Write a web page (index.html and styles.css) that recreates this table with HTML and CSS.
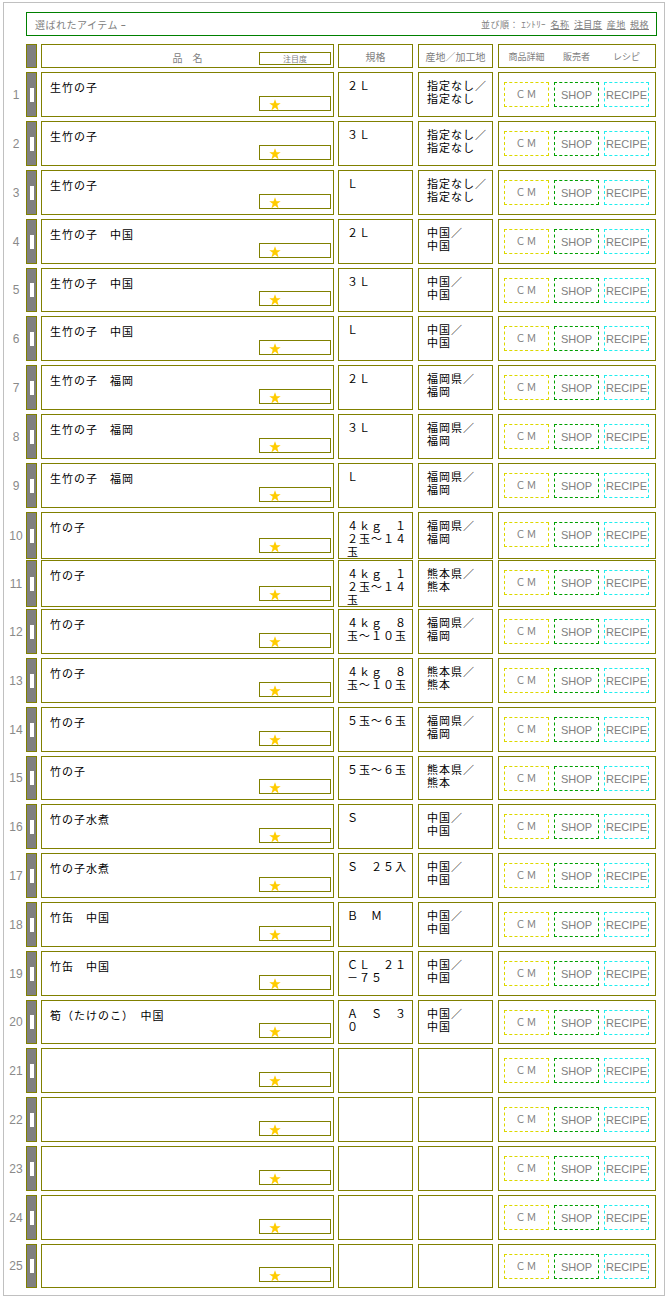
FILE: index.html
```html
<!DOCTYPE html>
<html lang="ja">
<head>
<meta charset="utf-8">
<title>選ばれたアイテム</title>
<link rel="stylesheet" href="styles.css">
</head>
<body>
<div class="page">
  <div class="title">
    <span class="title-text">選ばれたアイテム ｰ</span>
    <span class="sort">並び順： ｴﾝﾄﾘｰ <a href="#">名称</a> <a href="#">注目度</a> <a href="#">産地</a> <a href="#">規格</a></span>
  </div>
  <div class="list">
    <div class="row head">
      <span class="num"></span>
      <div class="handle"></div>
      <div class="cell name-head"><span class="head-label">品　名</span><span class="rate-head">注目度</span></div>
      <div class="cell head-text">規格</div>
      <div class="cell head-text origin-col">産地／加工地</div>
      <div class="cell links-head"><span>商品詳細</span><span>販売者</span><span>レシピ</span></div>
    </div>

    <div class="row"><span class="num">1</span><div class="handle"><i class="grip"></i></div><div class="cell name"><span>生竹の子</span><div class="rate"><svg class="star" viewBox="0 0 12 12"><polygon points="6,0.3 7.5,4.3 11.7,4.3 8.3,6.8 9.6,11.4 6,8.6 2.4,11.4 3.7,6.8 0.3,4.3 4.5,4.3"/></svg></div></div><div class="cell spec">２Ｌ</div><div class="cell origin">指定なし／<br>指定なし</div><div class="cell links"><span class="btn cm">ＣＭ</span><span class="btn shop">SHOP</span><span class="btn recipe">RECIPE</span></div></div>

    <div class="row"><span class="num">2</span><div class="handle"><i class="grip"></i></div><div class="cell name"><span>生竹の子</span><div class="rate"><svg class="star" viewBox="0 0 12 12"><polygon points="6,0.3 7.5,4.3 11.7,4.3 8.3,6.8 9.6,11.4 6,8.6 2.4,11.4 3.7,6.8 0.3,4.3 4.5,4.3"/></svg></div></div><div class="cell spec">３Ｌ</div><div class="cell origin">指定なし／<br>指定なし</div><div class="cell links"><span class="btn cm">ＣＭ</span><span class="btn shop">SHOP</span><span class="btn recipe">RECIPE</span></div></div>

    <div class="row"><span class="num">3</span><div class="handle"><i class="grip"></i></div><div class="cell name"><span>生竹の子</span><div class="rate"><svg class="star" viewBox="0 0 12 12"><polygon points="6,0.3 7.5,4.3 11.7,4.3 8.3,6.8 9.6,11.4 6,8.6 2.4,11.4 3.7,6.8 0.3,4.3 4.5,4.3"/></svg></div></div><div class="cell spec">Ｌ</div><div class="cell origin">指定なし／<br>指定なし</div><div class="cell links"><span class="btn cm">ＣＭ</span><span class="btn shop">SHOP</span><span class="btn recipe">RECIPE</span></div></div>

    <div class="row"><span class="num">4</span><div class="handle"><i class="grip"></i></div><div class="cell name"><span>生竹の子　中国</span><div class="rate"><svg class="star" viewBox="0 0 12 12"><polygon points="6,0.3 7.5,4.3 11.7,4.3 8.3,6.8 9.6,11.4 6,8.6 2.4,11.4 3.7,6.8 0.3,4.3 4.5,4.3"/></svg></div></div><div class="cell spec">２Ｌ</div><div class="cell origin">中国／<br>中国</div><div class="cell links"><span class="btn cm">ＣＭ</span><span class="btn shop">SHOP</span><span class="btn recipe">RECIPE</span></div></div>

    <div class="row"><span class="num">5</span><div class="handle"><i class="grip"></i></div><div class="cell name"><span>生竹の子　中国</span><div class="rate"><svg class="star" viewBox="0 0 12 12"><polygon points="6,0.3 7.5,4.3 11.7,4.3 8.3,6.8 9.6,11.4 6,8.6 2.4,11.4 3.7,6.8 0.3,4.3 4.5,4.3"/></svg></div></div><div class="cell spec">３Ｌ</div><div class="cell origin">中国／<br>中国</div><div class="cell links"><span class="btn cm">ＣＭ</span><span class="btn shop">SHOP</span><span class="btn recipe">RECIPE</span></div></div>

    <div class="row"><span class="num">6</span><div class="handle"><i class="grip"></i></div><div class="cell name"><span>生竹の子　中国</span><div class="rate"><svg class="star" viewBox="0 0 12 12"><polygon points="6,0.3 7.5,4.3 11.7,4.3 8.3,6.8 9.6,11.4 6,8.6 2.4,11.4 3.7,6.8 0.3,4.3 4.5,4.3"/></svg></div></div><div class="cell spec">Ｌ</div><div class="cell origin">中国／<br>中国</div><div class="cell links"><span class="btn cm">ＣＭ</span><span class="btn shop">SHOP</span><span class="btn recipe">RECIPE</span></div></div>

    <div class="row"><span class="num">7</span><div class="handle"><i class="grip"></i></div><div class="cell name"><span>生竹の子　福岡</span><div class="rate"><svg class="star" viewBox="0 0 12 12"><polygon points="6,0.3 7.5,4.3 11.7,4.3 8.3,6.8 9.6,11.4 6,8.6 2.4,11.4 3.7,6.8 0.3,4.3 4.5,4.3"/></svg></div></div><div class="cell spec">２Ｌ</div><div class="cell origin">福岡県／<br>福岡</div><div class="cell links"><span class="btn cm">ＣＭ</span><span class="btn shop">SHOP</span><span class="btn recipe">RECIPE</span></div></div>

    <div class="row"><span class="num">8</span><div class="handle"><i class="grip"></i></div><div class="cell name"><span>生竹の子　福岡</span><div class="rate"><svg class="star" viewBox="0 0 12 12"><polygon points="6,0.3 7.5,4.3 11.7,4.3 8.3,6.8 9.6,11.4 6,8.6 2.4,11.4 3.7,6.8 0.3,4.3 4.5,4.3"/></svg></div></div><div class="cell spec">３Ｌ</div><div class="cell origin">福岡県／<br>福岡</div><div class="cell links"><span class="btn cm">ＣＭ</span><span class="btn shop">SHOP</span><span class="btn recipe">RECIPE</span></div></div>

    <div class="row"><span class="num">9</span><div class="handle"><i class="grip"></i></div><div class="cell name"><span>生竹の子　福岡</span><div class="rate"><svg class="star" viewBox="0 0 12 12"><polygon points="6,0.3 7.5,4.3 11.7,4.3 8.3,6.8 9.6,11.4 6,8.6 2.4,11.4 3.7,6.8 0.3,4.3 4.5,4.3"/></svg></div></div><div class="cell spec">Ｌ</div><div class="cell origin">福岡県／<br>福岡</div><div class="cell links"><span class="btn cm">ＣＭ</span><span class="btn shop">SHOP</span><span class="btn recipe">RECIPE</span></div></div>

    <div class="row"><span class="num">10</span><div class="handle"><i class="grip"></i></div><div class="cell name"><span>竹の子</span><div class="rate"><svg class="star" viewBox="0 0 12 12"><polygon points="6,0.3 7.5,4.3 11.7,4.3 8.3,6.8 9.6,11.4 6,8.6 2.4,11.4 3.7,6.8 0.3,4.3 4.5,4.3"/></svg></div></div><div class="cell spec">４ｋｇ　１２玉～１４玉</div><div class="cell origin">福岡県／<br>福岡</div><div class="cell links"><span class="btn cm">ＣＭ</span><span class="btn shop">SHOP</span><span class="btn recipe">RECIPE</span></div></div>

    <div class="row"><span class="num">11</span><div class="handle"><i class="grip"></i></div><div class="cell name"><span>竹の子</span><div class="rate"><svg class="star" viewBox="0 0 12 12"><polygon points="6,0.3 7.5,4.3 11.7,4.3 8.3,6.8 9.6,11.4 6,8.6 2.4,11.4 3.7,6.8 0.3,4.3 4.5,4.3"/></svg></div></div><div class="cell spec">４ｋｇ　１２玉～１４玉</div><div class="cell origin">熊本県／<br>熊本</div><div class="cell links"><span class="btn cm">ＣＭ</span><span class="btn shop">SHOP</span><span class="btn recipe">RECIPE</span></div></div>

    <div class="row"><span class="num">12</span><div class="handle"><i class="grip"></i></div><div class="cell name"><span>竹の子</span><div class="rate"><svg class="star" viewBox="0 0 12 12"><polygon points="6,0.3 7.5,4.3 11.7,4.3 8.3,6.8 9.6,11.4 6,8.6 2.4,11.4 3.7,6.8 0.3,4.3 4.5,4.3"/></svg></div></div><div class="cell spec">４ｋｇ　８玉～１０玉</div><div class="cell origin">福岡県／<br>福岡</div><div class="cell links"><span class="btn cm">ＣＭ</span><span class="btn shop">SHOP</span><span class="btn recipe">RECIPE</span></div></div>

    <div class="row"><span class="num">13</span><div class="handle"><i class="grip"></i></div><div class="cell name"><span>竹の子</span><div class="rate"><svg class="star" viewBox="0 0 12 12"><polygon points="6,0.3 7.5,4.3 11.7,4.3 8.3,6.8 9.6,11.4 6,8.6 2.4,11.4 3.7,6.8 0.3,4.3 4.5,4.3"/></svg></div></div><div class="cell spec">４ｋｇ　８玉～１０玉</div><div class="cell origin">熊本県／<br>熊本</div><div class="cell links"><span class="btn cm">ＣＭ</span><span class="btn shop">SHOP</span><span class="btn recipe">RECIPE</span></div></div>

    <div class="row"><span class="num">14</span><div class="handle"><i class="grip"></i></div><div class="cell name"><span>竹の子</span><div class="rate"><svg class="star" viewBox="0 0 12 12"><polygon points="6,0.3 7.5,4.3 11.7,4.3 8.3,6.8 9.6,11.4 6,8.6 2.4,11.4 3.7,6.8 0.3,4.3 4.5,4.3"/></svg></div></div><div class="cell spec">５玉～６玉</div><div class="cell origin">福岡県／<br>福岡</div><div class="cell links"><span class="btn cm">ＣＭ</span><span class="btn shop">SHOP</span><span class="btn recipe">RECIPE</span></div></div>

    <div class="row"><span class="num">15</span><div class="handle"><i class="grip"></i></div><div class="cell name"><span>竹の子</span><div class="rate"><svg class="star" viewBox="0 0 12 12"><polygon points="6,0.3 7.5,4.3 11.7,4.3 8.3,6.8 9.6,11.4 6,8.6 2.4,11.4 3.7,6.8 0.3,4.3 4.5,4.3"/></svg></div></div><div class="cell spec">５玉～６玉</div><div class="cell origin">熊本県／<br>熊本</div><div class="cell links"><span class="btn cm">ＣＭ</span><span class="btn shop">SHOP</span><span class="btn recipe">RECIPE</span></div></div>

    <div class="row"><span class="num">16</span><div class="handle"><i class="grip"></i></div><div class="cell name"><span>竹の子水煮</span><div class="rate"><svg class="star" viewBox="0 0 12 12"><polygon points="6,0.3 7.5,4.3 11.7,4.3 8.3,6.8 9.6,11.4 6,8.6 2.4,11.4 3.7,6.8 0.3,4.3 4.5,4.3"/></svg></div></div><div class="cell spec">Ｓ</div><div class="cell origin">中国／<br>中国</div><div class="cell links"><span class="btn cm">ＣＭ</span><span class="btn shop">SHOP</span><span class="btn recipe">RECIPE</span></div></div>

    <div class="row"><span class="num">17</span><div class="handle"><i class="grip"></i></div><div class="cell name"><span>竹の子水煮</span><div class="rate"><svg class="star" viewBox="0 0 12 12"><polygon points="6,0.3 7.5,4.3 11.7,4.3 8.3,6.8 9.6,11.4 6,8.6 2.4,11.4 3.7,6.8 0.3,4.3 4.5,4.3"/></svg></div></div><div class="cell spec">Ｓ　２５入</div><div class="cell origin">中国／<br>中国</div><div class="cell links"><span class="btn cm">ＣＭ</span><span class="btn shop">SHOP</span><span class="btn recipe">RECIPE</span></div></div>

    <div class="row"><span class="num">18</span><div class="handle"><i class="grip"></i></div><div class="cell name"><span>竹缶　中国</span><div class="rate"><svg class="star" viewBox="0 0 12 12"><polygon points="6,0.3 7.5,4.3 11.7,4.3 8.3,6.8 9.6,11.4 6,8.6 2.4,11.4 3.7,6.8 0.3,4.3 4.5,4.3"/></svg></div></div><div class="cell spec">Ｂ　Ｍ</div><div class="cell origin">中国／<br>中国</div><div class="cell links"><span class="btn cm">ＣＭ</span><span class="btn shop">SHOP</span><span class="btn recipe">RECIPE</span></div></div>

    <div class="row"><span class="num">19</span><div class="handle"><i class="grip"></i></div><div class="cell name"><span>竹缶　中国</span><div class="rate"><svg class="star" viewBox="0 0 12 12"><polygon points="6,0.3 7.5,4.3 11.7,4.3 8.3,6.8 9.6,11.4 6,8.6 2.4,11.4 3.7,6.8 0.3,4.3 4.5,4.3"/></svg></div></div><div class="cell spec">ＣＬ　２１－７５</div><div class="cell origin">中国／<br>中国</div><div class="cell links"><span class="btn cm">ＣＭ</span><span class="btn shop">SHOP</span><span class="btn recipe">RECIPE</span></div></div>

    <div class="row"><span class="num">20</span><div class="handle"><i class="grip"></i></div><div class="cell name"><span>筍（たけのこ）　中国</span><div class="rate"><svg class="star" viewBox="0 0 12 12"><polygon points="6,0.3 7.5,4.3 11.7,4.3 8.3,6.8 9.6,11.4 6,8.6 2.4,11.4 3.7,6.8 0.3,4.3 4.5,4.3"/></svg></div></div><div class="cell spec">Ａ　Ｓ　３０</div><div class="cell origin">中国／<br>中国</div><div class="cell links"><span class="btn cm">ＣＭ</span><span class="btn shop">SHOP</span><span class="btn recipe">RECIPE</span></div></div>

    <div class="row"><span class="num">21</span><div class="handle"><i class="grip"></i></div><div class="cell name"><span></span><div class="rate"><svg class="star" viewBox="0 0 12 12"><polygon points="6,0.3 7.5,4.3 11.7,4.3 8.3,6.8 9.6,11.4 6,8.6 2.4,11.4 3.7,6.8 0.3,4.3 4.5,4.3"/></svg></div></div><div class="cell spec"></div><div class="cell origin"></div><div class="cell links"><span class="btn cm">ＣＭ</span><span class="btn shop">SHOP</span><span class="btn recipe">RECIPE</span></div></div>

    <div class="row"><span class="num">22</span><div class="handle"><i class="grip"></i></div><div class="cell name"><span></span><div class="rate"><svg class="star" viewBox="0 0 12 12"><polygon points="6,0.3 7.5,4.3 11.7,4.3 8.3,6.8 9.6,11.4 6,8.6 2.4,11.4 3.7,6.8 0.3,4.3 4.5,4.3"/></svg></div></div><div class="cell spec"></div><div class="cell origin"></div><div class="cell links"><span class="btn cm">ＣＭ</span><span class="btn shop">SHOP</span><span class="btn recipe">RECIPE</span></div></div>

    <div class="row"><span class="num">23</span><div class="handle"><i class="grip"></i></div><div class="cell name"><span></span><div class="rate"><svg class="star" viewBox="0 0 12 12"><polygon points="6,0.3 7.5,4.3 11.7,4.3 8.3,6.8 9.6,11.4 6,8.6 2.4,11.4 3.7,6.8 0.3,4.3 4.5,4.3"/></svg></div></div><div class="cell spec"></div><div class="cell origin"></div><div class="cell links"><span class="btn cm">ＣＭ</span><span class="btn shop">SHOP</span><span class="btn recipe">RECIPE</span></div></div>

    <div class="row"><span class="num">24</span><div class="handle"><i class="grip"></i></div><div class="cell name"><span></span><div class="rate"><svg class="star" viewBox="0 0 12 12"><polygon points="6,0.3 7.5,4.3 11.7,4.3 8.3,6.8 9.6,11.4 6,8.6 2.4,11.4 3.7,6.8 0.3,4.3 4.5,4.3"/></svg></div></div><div class="cell spec"></div><div class="cell origin"></div><div class="cell links"><span class="btn cm">ＣＭ</span><span class="btn shop">SHOP</span><span class="btn recipe">RECIPE</span></div></div>

    <div class="row"><span class="num">25</span><div class="handle"><i class="grip"></i></div><div class="cell name"><span></span><div class="rate"><svg class="star" viewBox="0 0 12 12"><polygon points="6,0.3 7.5,4.3 11.7,4.3 8.3,6.8 9.6,11.4 6,8.6 2.4,11.4 3.7,6.8 0.3,4.3 4.5,4.3"/></svg></div></div><div class="cell spec"></div><div class="cell origin"></div><div class="cell links"><span class="btn cm">ＣＭ</span><span class="btn shop">SHOP</span><span class="btn recipe">RECIPE</span></div></div>
  </div>
</div>
</body>
</html>
```

FILE: styles.css
```css
* {
  box-sizing: border-box;
}

body {
  margin: 0;
  background: #fff;
  font-family: "Noto Sans CJK JP", "Liberation Sans", sans-serif;
  color: #000;
}

.page {
  margin: 2px 0 0 3px;
  width: 662px;
  border: 1px solid #c0c0c0;
  padding: 9px 7px 7px 0;
}

.title {
  margin-left: 22px;
  height: 24px;
  border: 1px solid #008000;
  display: flex;
  align-items: center;
  justify-content: space-between;
  padding: 0 7px 0 8px;
  color: #808080;
}

.title-text {
  font-size: 10px;
  letter-spacing: 0.5px;
}

.sort {
  font-size: 9px;
  letter-spacing: 0.45px;
}

.sort a {
  color: #808080;
  text-decoration: underline;
  margin-left: 2px;
}

.list {
  margin-top: 8px;
  display: flex;
  flex-direction: column;
  gap: 4px;
}

.row {
  display: grid;
  grid-template-columns: 18px 11px 293px 75px 75px 158px;
  column-gap: 4px;
  height: 45px;
}

.row:nth-child(5n+1) {
  height: 44px;
}

.row.head {
  height: 24px;
}

.num {
  align-self: center;
  text-align: center;
  margin: 0 -4px 0 2px;
  font: 12px "Liberation Sans", sans-serif;
  color: #8a8a8a;
}

.handle {
  background: #808080;
  border: 1px solid #808000;
  display: flex;
  align-items: center;
  justify-content: center;
}

.grip {
  display: block;
  width: 4px;
  height: 14px;
  background: #fff;
}

.cell {
  border: 1px solid #808000;
  min-width: 0;
}

.origin,
.origin-col {
  margin-left: 1px;
  margin-right: -1px;
}

.links,
.links-head {
  margin-left: 2px;
  margin-right: -2px;
}

.name-head {
  display: grid;
  grid-template-columns: 74px 1fr 74px;
  align-items: center;
}

.head-label {
  grid-column: 2;
  text-align: center;
  font-size: 10px;
  color: #808080;
  padding-top: 2px;
}

.rate-head {
  grid-column: 3;
  align-self: end;
  margin: 0 2px 2px 0;
  height: 13px;
  border: 1px solid #808000;
  font-size: 8px;
  line-height: 11px;
  text-align: center;
  color: #808080;
}

.head-text {
  display: flex;
  align-items: center;
  justify-content: center;
  font-size: 10px;
  color: #808080;
}

.links-head {
  display: flex;
  align-items: center;
  gap: 5px;
  padding-left: 5px;
  font-size: 9px;
  color: #808080;
}

.links-head span {
  width: 45px;
  text-align: center;
}

.name {
  display: flex;
  flex-direction: column;
  align-items: flex-start;
  padding: 8px 0 0 8px;
  font-size: 11px;
  letter-spacing: 1px;
  line-height: 13px;
}

.rate {
  margin: auto 2px 5px 0;
  align-self: flex-end;
  width: 72px;
  height: 15px;
  border: 1px solid #808000;
}

.star {
  display: block;
  margin: 2px 0 0 9px;
  width: 12px;
  height: 12px;
  fill: #ffcc00;
}

.spec {
  padding: 6px 2px 0 8px;
  font-size: 11px;
  letter-spacing: 1px;
  line-height: 13px;
  line-break: anywhere;
}

.origin {
  padding: 6px 2px 0 8px;
  font-size: 11px;
  letter-spacing: 1px;
  line-height: 13px;
}

.links {
  display: flex;
  align-items: flex-start;
  gap: 5px;
  padding: 9px 0 0 5px;
}

.btn {
  width: 45px;
  height: 25px;
  border: 1px dashed;
  display: flex;
  align-items: center;
  justify-content: center;
  color: #808080;
  font: 11px "Liberation Sans", sans-serif;
}

.btn.cm {
  border-color: #dcd800;
  font-family: "Noto Sans CJK JP", sans-serif;
  font-size: 10px;
  letter-spacing: 1px;
  padding-bottom: 2px;
}

.btn.shop {
  border-color: #00a000;
}

.btn.recipe {
  border-color: #22eeee;
}
```
